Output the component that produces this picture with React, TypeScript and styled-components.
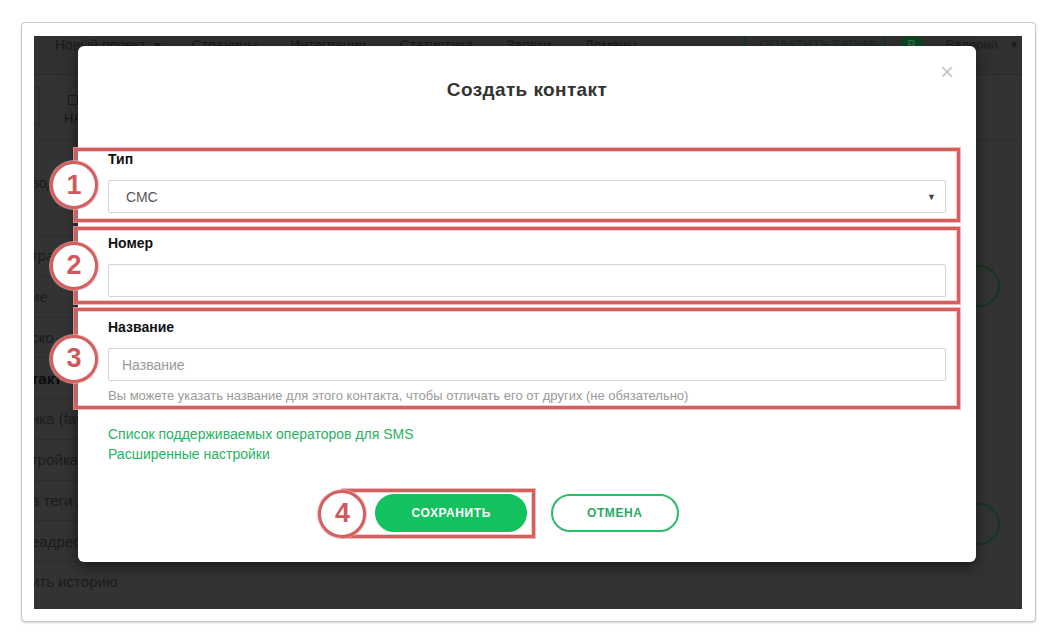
import styled, { createGlobalStyle } from "styled-components";

const GlobalStyle = createGlobalStyle`
  html, body {
    margin: 0;
    padding: 0;
    background: #ffffff;
    font-family: "Liberation Sans", Arial, sans-serif;
  }
  * {
    box-sizing: border-box;
  }
`;

const Page = styled.div`
  padding: 22px 0 0 21px;
  width: 1054px;
  height: 638px;
`;

const Frame = styled.div`
  width: 1015px;
  height: 600px;
  background: #fff;
  border: 1px solid #c9c9c9;
  border-radius: 4px;
  box-shadow: 0 1px 2px rgba(0, 0, 0, 0.18);
  padding: 13px 13px 12px 12px;
`;

const Screen = styled.div`
  position: relative;
  width: 988px;
  height: 573px;
  overflow: hidden;
  background: #333333;
  display: flex;
  flex-direction: column;
`;

/* ---------- dimmed app behind the modal ---------- */

const Nav = styled.div`
  height: 39px;
  flex-shrink: 0;
  display: flex;
  align-items: flex-start;
  padding: 1px 3px 0 21px;
  background: #303030;
  border-bottom: 1px solid #2a2a2a;
  font-size: 14px;
  line-height: 16px;
  color: #1a1a1a;
`;

const NavItem = styled.span<{ $gap?: number }>`
  margin-right: ${(p) => p.$gap ?? 33}px;
  white-space: nowrap;
`;

const Spacer = styled.div`
  flex: 1;
`;

const NavDivider = styled.span`
  width: 2px;
  height: 22px;
  margin-top: -4px;
  background: #10381f;
`;

const PayLink = styled.span`
  width: 138px;
  padding-left: 14px;
  font-size: 13px;
  color: #1b2a20;
  white-space: nowrap;
`;

const Avatar = styled.span`
  width: 24px;
  height: 24px;
  margin: -4px 22px 0 14px;
  border-radius: 50%;
  background: #0d4422;
  color: #2d6a40;
  font-size: 12px;
  font-weight: bold;
  display: flex;
  align-items: center;
  justify-content: center;
`;

const UserName = styled.span`
  margin-right: 11px;
  font-size: 13px;
  color: #1c1c1c;
`;

const Caret = styled.span`
  font-size: 10px;
  color: #1a1a1a;
`;

const Toolbar = styled.div`
  height: 65px;
  flex-shrink: 0;
  display: flex;
  align-items: center;
  gap: 24px;
  border-bottom: 1px solid #2d2d2d;
`;

const ToolButton = styled.div`
  width: 6px;
  height: 38px;
  margin-top: -2px;
  border: 1px solid #2a2a2a;
  border-left: none;
  border-radius: 0 3px 3px 0;
`;

const ToolItem = styled.div`
  display: flex;
  flex-direction: column;
  gap: 6px;
  font-size: 13px;
  color: #161616;
  margin-top: 6px;
`;

const ToolIcon = styled.span`
  width: 10px;
  height: 10px;
  margin-left: 4px;
  border: 1px solid #1d1d1d;
`;

const Main = styled.div`
  flex: 1;
  display: flex;
`;

const Sidebar = styled.div`
  width: 176px;
  padding-top: 30px;
  margin-left: -3px;
`;

const SideHead = styled.div`
  height: 26px;
  line-height: 26px;
  font-size: 15px;
  color: #1b1b1b;
  margin-bottom: 39px;
`;

const SideItem = styled.div<{ $active?: boolean }>`
  height: 40.75px;
  display: flex;
  align-items: center;
  border-top: 1px solid #2c2c2c;
  font-size: 15px;
  white-space: nowrap;
  color: ${(p) => (p.$active ? "#0b0b0b" : "#1b1b1b")};
  font-weight: ${(p) => (p.$active ? 600 : 400)};
`;

const Content = styled.div`
  flex: 1;
  display: flex;
  flex-direction: column;
  align-items: flex-end;
  padding-right: 22px;
`;

const Ring = styled.div<{ $top: number }>`
  width: 42px;
  height: 42px;
  margin-top: ${(p) => p.$top}px;
  border: 2px solid #0f3821;
  border-radius: 50%;
`;

/* ---------- modal ---------- */

const Modal = styled.div`
  position: absolute;
  left: 44px;
  top: 10px;
  width: 898px;
  height: 516px;
  background: #fff;
  border-radius: 6px;
  box-shadow: 0 5px 15px rgba(0, 0, 0, 0.5);
`;

const Header = styled.div`
  display: grid;
  grid-template-columns: 1fr auto 1fr;
  align-items: start;
  padding: 0 22px;
`;

const Title = styled.h3`
  grid-column: 2;
  margin: 32px 0 0;
  font-size: 19px;
  line-height: 24px;
  letter-spacing: 0.4px;
  font-weight: bold;
  color: #333;
`;

const Close = styled.span`
  grid-column: 3;
  justify-self: end;
  margin-top: 16px;
  font-size: 24px;
  line-height: 20px;
  color: #c8c8c8;
`;

const Body = styled.div`
  padding: 47px 30px 30px;
`;

const Group = styled.div<{ $space?: number }>`
  position: relative;
  margin-top: ${(p) => p.$space ?? 0}px;
`;

const Label = styled.div`
  font-size: 14px;
  line-height: 20px;
  font-weight: bold;
  color: #111;
  margin-bottom: 11px;
`;

const Field = styled.div<{ $pad?: number }>`
  height: 33px;
  display: flex;
  align-items: center;
  justify-content: space-between;
  padding: 0 9px 0 ${(p) => p.$pad ?? 13}px;
  border: 1px solid #d3d3d3;
  border-radius: 2px;
  font-size: 14px;
  color: #555;
`;

const Placeholder = styled.span`
  color: #999;
`;

const SelectArrow = styled.span`
  font-size: 9px;
  color: #444;
`;

const Help = styled.div`
  margin-top: 6px;
  font-size: 13px;
  line-height: 17px;
  color: #9a9a9a;
`;

const Links = styled.div`
  margin-top: 20px;
  display: flex;
  flex-direction: column;
  align-items: flex-start;
`;

const GreenLink = styled.a`
  font-size: 14px;
  line-height: 20px;
  color: #27b35f;
  text-decoration: none;
`;

const Footer = styled.div`
  margin-top: 30px;
  display: flex;
  justify-content: center;
  gap: 24px;
`;

const Button = styled.button<{ $primary?: boolean }>`
  height: 38px;
  padding: 0 34px;
  border-radius: 19px;
  border: 2px solid ${(p) => (p.$primary ? "#13c15f" : "#2cbd69")};
  background: ${(p) => (p.$primary ? "#13c15f" : "#fff")};
  color: ${(p) => (p.$primary ? "#fff" : "#2ea864")};
  font-family: "Liberation Sans", Arial, sans-serif;
  font-size: 12px;
  font-weight: bold;
  letter-spacing: 0.6px;
`;

const SaveWrap = styled.div`
  position: relative;
  display: flex;
`;

/* ---------- annotations ---------- */

const Mark = styled.div<{ $t: number; $b: number; $l: number; $r: number }>`
  position: absolute;
  top: ${(p) => p.$t}px;
  bottom: ${(p) => p.$b}px;
  left: ${(p) => p.$l}px;
  right: ${(p) => p.$r}px;
  border: 3px solid #d35f5f;
  box-shadow: 0 0 0 1px rgba(238, 170, 170, 0.8),
    inset 0 0 0 1px rgba(238, 170, 170, 0.6);
  pointer-events: none;
`;

const Badge = styled.div`
  position: absolute;
  left: -27px;
  top: 50%;
  transform: translateY(-50%);
  width: 48px;
  height: 48px;
  border-radius: 50%;
  background: #fff;
  border: 3px solid #d35f5f;
  box-shadow: 0 0 0 1px rgba(238, 170, 170, 0.7);
  display: flex;
  align-items: center;
  justify-content: center;
  font-size: 27px;
  font-weight: bold;
  color: #cf5a5e;
`;

const sideItems = [
  "тра",
  "ие",
  "ско",
  "такт",
  "нка (favicon)",
  "тройка",
  "а теги для",
  "еадрес",
  "ить историю",
];

export default function App() {
  return (
    <>
      <GlobalStyle />
      <Page>
        <Frame>
          <Screen>
            <Nav>
              <NavItem $gap={31}>Новый проект &nbsp;▾</NavItem>
              <NavItem>Страницы</NavItem>
              <NavItem>Интеграции</NavItem>
              <NavItem>Статистика</NavItem>
              <NavItem>Заявки</NavItem>
              <NavItem>Домены</NavItem>
              <Spacer />
              <NavDivider />
              <PayLink>ОПЛАТИТЬ ТАРИФ</PayLink>
              <NavDivider />
              <Avatar>В</Avatar>
              <UserName>Валерий</UserName>
              <Caret>▼</Caret>
            </Nav>
            <Toolbar>
              <ToolButton />
              <ToolItem>
                <ToolIcon />
                <span>НАСТРОЙКИ</span>
              </ToolItem>
            </Toolbar>
            <Main>
              <Sidebar>
                <SideHead>вод</SideHead>
                {sideItems.map((t) => (
                  <SideItem key={t} $active={t === "такт"}>
                    {t}
                  </SideItem>
                ))}
              </Sidebar>
              <Content>
                <Ring $top={125} />
                <Ring $top={196} />
              </Content>
            </Main>

            <Modal>
              <Header>
                <Title>Создать контакт</Title>
                <Close>×</Close>
              </Header>
              <Body>
                <Group>
                  <Label>Тип</Label>
                  <Field $pad={17}>
                    <span>СМС</span>
                    <SelectArrow>▼</SelectArrow>
                  </Field>
                  <Mark $t={-1} $b={-9} $l={-34} $r={-14}>
                    <Badge>1</Badge>
                  </Mark>
                </Group>
                <Group $space={20}>
                  <Label>Номер</Label>
                  <Field />
                  <Mark $t={-6} $b={-7} $l={-34} $r={-14}>
                    <Badge>2</Badge>
                  </Mark>
                </Group>
                <Group $space={20}>
                  <Label>Название</Label>
                  <Field>
                    <Placeholder>Название</Placeholder>
                  </Field>
                  <Help>
                    Вы можете указать название для этого контакта, чтобы
                    отличать его от других (не обязательно)
                  </Help>
                  <Mark $t={-9} $b={-5} $l={-34} $r={-14}>
                    <Badge>3</Badge>
                  </Mark>
                </Group>
                <Links>
                  <GreenLink href="#">
                    Список поддерживаемых операторов для SMS
                  </GreenLink>
                  <GreenLink href="#">Расширенные настройки</GreenLink>
                </Links>
                <Footer>
                  <SaveWrap>
                    <Button $primary>СОХРАНИТЬ</Button>
                    <Mark $t={-5} $b={-6} $l={-33} $r={-8}>
                      <Badge>4</Badge>
                    </Mark>
                  </SaveWrap>
                  <Button>ОТМЕНА</Button>
                </Footer>
              </Body>
            </Modal>
          </Screen>
        </Frame>
      </Page>
    </>
  );
}
